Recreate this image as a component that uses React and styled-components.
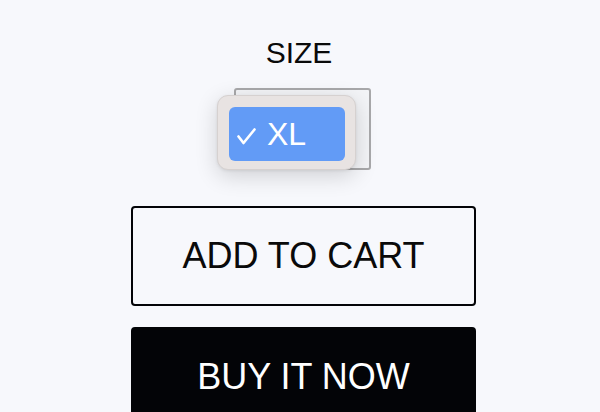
import styled, { createGlobalStyle } from "styled-components"

const Global = createGlobalStyle`
    html, body {
        margin: 0;
        padding: 0;
        background: #F7F8FC;
        overflow: hidden;
    }
    body {
        font-family: "Liberation Sans", Arial, sans-serif;
    }
`

export default function App() {
    return (
        <Page>
            <Global />
            <Column>
                <Label>SIZE</Label>
                <SelectArea>
                    <SelectBox />
                    <Popup>
                        <Option>
                            <Check width="19" height="17" viewBox="0 0 19 17">
                                <path d="M1.5 8.5 L6.5 15 L17.5 1.5" fill="none" stroke="#FFFFFF" strokeWidth="2.6" strokeLinecap="round" strokeLinejoin="round" />
                            </Check>
                            <span>XL</span>
                        </Option>
                    </Popup>
                </SelectArea>
                <Button>ADD TO CART</Button>
                <Button $dark>BUY IT NOW</Button>
            </Column>
        </Page>
    )
}

const Page = styled.div`
    width: 600px;
    height: 412px;
    overflow: hidden;
    background: #F7F8FC;
`
const Column = styled.div`
    width: 345px;
    margin-left: 131px;
    padding-top: 36px;
    display: flex;
    flex-direction: column;
    align-items: stretch;
`
const Label = styled.div`
    font-size: 30px;
    line-height: 34px;
    color: #0a0a0a;
    text-align: center;
    padding-right: 9px;
`
const SelectArea = styled.div`
    position: relative;
    height: 82px;
    margin-top: 18px;
    margin-bottom: 36px;
`
const SelectBox = styled.div`
    position: absolute;
    left: 103px;
    top: 0;
    width: 133px;
    height: 78px;
    border: 2px solid #A8A8AA;
    border-radius: 3px;
    background: #F3F4F7;
`
const Popup = styled.div`
    position: absolute;
    left: 86px;
    top: 7px;
    width: 139px;
    height: 75px;
    box-sizing: border-box;
    padding: 11px 10px 10px 11px;
    background: #E8E3E2;
    border: 1px solid #D6D1D0;
    border-radius: 11px;
    box-shadow: 0 6px 22px rgba(0, 0, 0, 0.16), 0 1px 3px rgba(0, 0, 0, 0.08);
`
const Option = styled.div`
    height: 54px;
    border-radius: 6px;
    background: #629BF6;
    color: #FFFFFF;
    display: flex;
    align-items: center;
    padding-left: 8px;
    font-size: 32px;
    line-height: 54px;
`
const Check = styled.svg`
    display: block;
    margin-right: 11px;
    margin-top: 4px;
`
const Button = styled.div`
    height: 100px;
    box-sizing: border-box;
    border: 2px solid #030407;
    border-radius: 4px;
    background: ${p => p.$dark ? "#030407" : "transparent"};
    color: ${p => p.$dark ? "#FFFFFF" : "#0a0a0a"};
    display: flex;
    align-items: center;
    justify-content: center;
    font-size: 36px;
    margin-bottom: 21px;
`
